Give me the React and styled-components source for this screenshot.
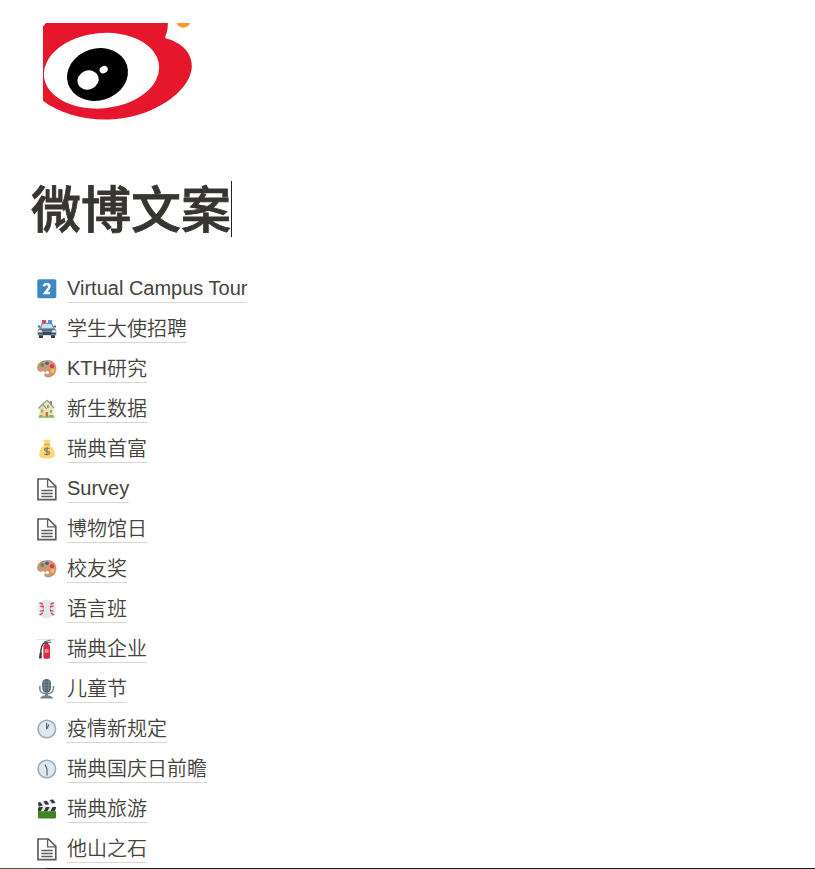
import React from "react";
import styled, { createGlobalStyle } from "styled-components";

const GlobalStyle = createGlobalStyle`
  * { box-sizing: border-box; }
  body { margin: 0; background: #fff; overflow: hidden; }
`;

const Page = styled.main`
  display: flex;
  flex-direction: column;
  height: 869px;
  overflow: hidden;
  color: #37352f;
  font-family: "Liberation Sans", "Noto Sans CJK SC", sans-serif;
`;

const Content = styled.div`
  flex: 1;
  min-height: 0;
  overflow: hidden;
  padding: 23px 31px 0;
`;

const Logo = styled.svg`
  display: block;
  width: 150px;
  height: 98px;
  margin-left: 12px;
`;

const TitleRow = styled.header`
  display: flex;
  align-items: center;
  height: 56px;
  margin-top: 60px;
`;

const Title = styled.h1`
  margin: 0;
  padding-top: 3px;
  font-size: 50px;
  font-weight: 500;
  -webkit-text-stroke: 0.8px #37352f;
  line-height: 56px;
  white-space: nowrap;
`;

const Caret = styled.span`
  width: 1px;
  height: 56px;
  background: #222;
`;

const List = styled.ul`
  list-style: none;
  margin: 31px 0 0;
  padding: 0 0 0 6px;
`;

const Item = styled.li`
  display: flex;
  align-items: center;
  height: 40px;
`;

const Icon = styled.svg`
  flex: none;
  width: 20px;
  height: ${(p) => (p.$tall ? 23 : 20)}px;
  margin: 2px 10px 0 0;
`;

const Label = styled.a`
  height: 27px;
  margin-top: 3px;
  padding-top: 1px;
  border-bottom: 1px solid #d8d7d5;
  color: #45433d;
  font-size: 20px;
  font-weight: 350;
  line-height: 24px;
  white-space: nowrap;
`;

const Latin = styled.span`
  font-weight: 400;
  line-height: 1;
  vertical-align: 1px;
`;

const BottomEdge = styled.footer`
  flex: none;
  height: 1px;
  background: linear-gradient(90deg, #4b5651 45px, #1d2522 45px);
`;

const icons = {
  two: (
    <>
      <rect x="0.3" y="0.3" width="19" height="19" rx="1.8" fill="#3c88c5" />
      <path d="M6.9 7.4C7.1 5.7 8 5 9.6 5c1.8 0 2.8 1 2.8 2.5 0 2.3-2.6 3.5-4.3 6.4h5" fill="none" stroke="#fff" strokeWidth="2.5" />
    </>
  ),
  police: (
    <>
      <path d="M5 1h4v3H5z" fill="#e5434f" />
      <path d="M11 1h4v3h-4z" fill="#459bdc" />
      <path d="M9 1.6h2V4H9z" fill="#dce3e9" />
      <path d="M2 14h4v5H2zm12 0h4v5h-4z" fill="#2e383f" />
      <path d="M5 4h10l2.5 5 1.8 2v5.5H.7V11l1.8-2z" fill="#71879a" />
      <path d="M5.7 5h8.6l1.7 4.2H4z" fill="#c6e1f0" />
      <path d="M1 6.5h2v2H1zm16 0h2v2h-2zM3 10h14l-2 2H5z" fill="#566b7b" />
      <path d="M6 13h8v3H6zM1 14h18v1H1z" fill="#394a55" />
      <path d="M1.3 11.2h3.4v2H1.3zm14 0h3.4v2h-3.4z" fill="#f0f5f7" />
      <path d="M7 16h6v1.2H7z" fill="#dce4e9" />
    </>
  ),
  palette: (
    <>
      <path d="M10.5 1C4.8 1 0 4.4 0 8.7c0 3 2.8 4.7 4.8 3.8 2.2-1 4 .4 3 2.2-.5 1-.9 2 .3 2.8 4.2 2.7 11.3-1.1 11.3-7.8C19.4 4.4 15.7 1 10.5 1z" fill="#d09478" />
      <ellipse cx="10.3" cy="13.6" rx="1.8" ry="1.5" fill="#fff" />
      <circle cx="5.3" cy="6" r="1.9" fill="#4a9959" />
      <circle cx="10.1" cy="4.2" r="1.8" fill="#286bac" />
      <circle cx="15" cy="7.2" r="2" fill="#dc303b" />
      <circle cx="15.6" cy="12" r="1.9" fill="#f5c43b" />
    </>
  ),
  house: (
    <>
      <path d="M2.5 9.5 5.5 5.5 9 9.5V18H2.5z" fill="#f4d88d" />
      <path d="M6.2 6.5 10.5 2l6 7v9H8z" fill="#f8e5a5" />
      <path d="M13 2h2v4h-2z" fill="#aa7a61" />
      <path d="m1.5 9.5 4-4.2 4.8-4L17 9.2M5.8 5.2l4 5" fill="none" stroke="#8f979b" strokeWidth="1.3" />
      <path d="M4 10.5h2v3H4zm6-4.5h2.2v3H10zM13 11h2v3h-2z" fill="#69aed5" />
      <path d="M8.5 13h2.6v5H8.5z" fill="#b97952" />
      <path d="M1.5 17.5h16v1.2h-16zM2.5 16h3v2H2zm9.5 0h4.5v2H12z" fill="#84b460" />
    </>
  ),
  money: (
    <>
      <path d="M6.2 1.2 8 .4l2 .5 2-.5 1.8.8-2 4.3c3.8 2.3 6 6.5 6 10 0 3.2-2 4-7.8 4s-7.8-.8-7.8-4c0-3.5 2.2-7.7 6-10z" fill="#fcd777" />
      <path d="M6.9 5.5h6.2" stroke="#dca64b" strokeWidth="1.6" />
      <path d="M12.4 9.7c-1-1.1-4.8-.9-4.8 1.1 0 2.2 5 1 5 3.2 0 2-3.8 2.1-5.3.8M10 8v8.2" fill="none" stroke="#84785a" strokeWidth="1.2" />
    </>
  ),
  page: (
    <>
      <path d="M1 1h10.3l7.5 7.3v13.4H1z" fill="none" stroke="#5f5e5a" strokeWidth="1.7" />
      <path d="M10.6 1.2v7.7h8M4.3 12.5h11.4M4.3 15.5h11.4M4.3 18.5h11.4" fill="none" stroke="#5f5e5a" strokeWidth="1.3" />
    </>
  ),
  baseball: (
    <>
      <circle cx="9.8" cy="9.9" r="9.4" fill="#e2e8ec" />
      <path d="M4 3.2c3 3.7 3 9.7 0 13.3M15.6 3.2c-3 3.7-3 9.7 0 13.3" fill="none" stroke="#e18994" strokeWidth="1" />
      <path d="m2.4 3.8 3.6 1.4M3.2 7.2l3.8.6M3.2 12.3l3.6-1M2.4 16l3.2-2M13.6 5.2l3.6-1.4M12.8 7.8l3.6-.6M12.8 11.3l3.6 1M14 14l3.2 2" stroke="#d64b59" strokeWidth="1.4" />
    </>
  ),
  extinguisher: (
    <>
      <path d="M8 3.7C4.6 5 3.6 9.5 3.8 16v3" fill="none" stroke="#343a3e" strokeWidth="1.4" />
      <rect x="6.4" y="5.3" width="6.6" height="14.4" rx="1.6" fill="#dc2842" />
      <path d="M7.7 2.5h3.6v3H7.7z" fill="#49555d" />
      <path d="m7 3 7-2.3M10 3.5l4.4-.2" stroke="#697680" strokeWidth="1.2" />
      <path d="M7.8 10.2h3.8v3.6H7.8z" fill="#f18e9b" />
      <path d="M2.6 13.8h2.2l-.6 5.8H2z" fill="#343a3e" />
      <path d="M0 .4h17.8" stroke="#d5d5d5" strokeWidth=".7" />
    </>
  ),
  microphone: (
    <>
      <path d="M2.8 7v2.5c0 3 2.6 5.2 6.8 5.2s6.8-2.2 6.8-5.2V7" fill="none" stroke="#85939c" strokeWidth="1.7" />
      <rect x="5.2" y="0" width="8.8" height="13.4" rx="4.3" fill="#566772" />
      <path d="M5.8 3h7.8M5.5 6h8.4M5.5 9h8.4M7.8 1v11M11.6 1v11" stroke="#8497a3" strokeWidth=".6" />
      <path d="M8.2 13H11v4H8.2zM3.2 19.5c0-2 3-3.3 6.4-3.3s6.4 1.3 6.4 3.3z" fill="#71828d" />
    </>
  ),
  clockOne: (
    <>
      <circle cx="9.8" cy="10" r="8.8" fill="#e0e8ef" stroke="#9aabb8" strokeWidth="1.6" />
      <path d="M9.6 3.8v6.4M9.8 10l2.2-4.4" stroke="#59656d" strokeWidth="1.2" />
    </>
  ),
  clockHalf: (
    <>
      <circle cx="9.8" cy="10" r="8.8" fill="#e0e8ef" stroke="#9aabb8" strokeWidth="1.6" />
      <path d="m8 5.4 2 4.6v6.5" fill="none" stroke="#59656d" strokeWidth="1.2" />
    </>
  ),
  clapper: (
    <>
      <path d="M.8 3.5 17.8 0l.9 4L1.6 7.5z" fill="#e6eaec" />
      <path d="M1 7.5h18v5H1z" fill="#e6eaec" />
      <path d="m1 3.5 2.2-.5 2.6 3.6L1.6 7.5zM6.3 2.4l3.4-.7 2.4 3.6-3.2.6zM12.7 1.1l3.2-.7 2.6 3.3-3.2.8zM2 8h4l-2.3 4.4H1V9.8zM9 8h3.7l-2.5 4.4H6.5zM15.5 8H19v1.3l-1.8 3.1h-4z" fill="#30383b" />
      <path d="M1 12.2h18v6c0 .7-.4 1.2-1 1.2H2c-.6 0-1-.5-1-1.2z" fill="#40841f" />
    </>
  ),
};

const pages = [
  { icon: "two", latin: "Virtual Campus Tour" },
  { icon: "police", han: "学生大使招聘" },
  { icon: "palette", latin: "KTH", han: "研究" },
  { icon: "house", han: "新生数据" },
  { icon: "money", han: "瑞典首富" },
  { icon: "page", latin: "Survey" },
  { icon: "page", han: "博物馆日" },
  { icon: "palette", han: "校友奖" },
  { icon: "baseball", han: "语言班" },
  { icon: "extinguisher", han: "瑞典企业" },
  { icon: "microphone", han: "儿童节" },
  { icon: "clockOne", han: "疫情新规定" },
  { icon: "clockHalf", han: "瑞典国庆日前瞻" },
  { icon: "clapper", han: "瑞典旅游" },
  { icon: "page", han: "他山之石" },
];

function WeiboLogo() {
  return (
    <Logo viewBox="0 0 150 98">
      <path d="M3 0H124.8C125 5 124 9.5 122.5 13c-.6 1.7 0 2.4 1.5 2.8C139 20 148.8 30 148.8 43c0 25-40 53.6-86 53.6C38 96.6 15 89.5 0 77.8V3.5z" fill="#e6162d" />
      <ellipse cx="58.5" cy="47.8" rx="57.8" ry="37.7" transform="rotate(-5.6 58.5 47.8)" fill="#fff" />
      <ellipse cx="54.5" cy="51.5" rx="30.9" ry="26" transform="rotate(-17.5 54.5 51.5)" fill="#000" />
      <ellipse cx="45" cy="57" rx="10.9" ry="9.5" transform="rotate(-22 45 57)" fill="#fff" />
      <ellipse cx="60.7" cy="46.6" rx="4.2" ry="3.5" transform="rotate(-25 60.7 46.6)" fill="#fff" />
      <circle cx="140.3" cy="-2.3" r="7" fill="#ff9933" />
    </Logo>
  );
}

export default function App() {
  return (
    <Page>
      <GlobalStyle />
      <Content>
        <WeiboLogo />
        <TitleRow>
          <Title>微博文案</Title>
          <Caret />
        </TitleRow>
        <List>
          {pages.map(({ icon, latin, han }, index) => (
            <Item key={index}>
              <Icon $tall={icon === "page"} viewBox={icon === "page" ? "0 0 20 23" : "0 0 20 20"}>
                {icons[icon]}
              </Icon>
              <Label>
                {latin && <Latin>{latin}</Latin>}
                {han}
              </Label>
            </Item>
          ))}
        </List>
      </Content>
      <BottomEdge />
    </Page>
  );
}
